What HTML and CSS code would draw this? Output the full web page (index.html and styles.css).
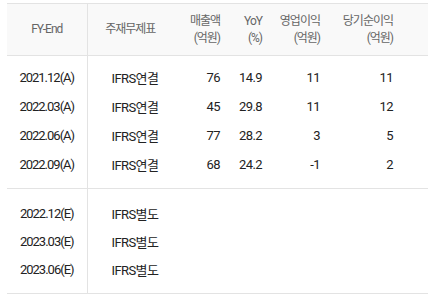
FILE: index.html
```html
<!DOCTYPE html>
<html lang="ko">
<head>
    <meta charset="UTF-8">
    <title>실적</title>
    <link rel="stylesheet" href="styles.css">
</head>
<body>
    <table class="fin-table">
        <colgroup>
            <col class="c-date">
            <col class="c-type">
            <col class="c-sales">
            <col class="c-yoy">
            <col class="c-op">
            <col class="c-net">
        </colgroup>
        <thead>
            <tr>
                <th class="first">FY-End</th>
                <th class="center">주재무제표</th>
                <th>매출액<br>(억원)</th>
                <th>YoY<br>(%)</th>
                <th>영업이익<br>(억원)</th>
                <th>당기순이익<br>(억원)</th>
            </tr>
        </thead>
        <!-- 실적 -->
        <tbody class="actual">
            <tr><td class="first">2021.12(A)</td><td class="type">IFRS연결</td><td>76</td><td>14.9</td><td>11</td><td>11</td></tr>
            <tr><td class="first">2022.03(A)</td><td class="type">IFRS연결</td><td>45</td><td>29.8</td><td>11</td><td>12</td></tr>
            <tr><td class="first">2022.06(A)</td><td class="type">IFRS연결</td><td>77</td><td>28.2</td><td>3</td><td>5</td></tr>
            <tr><td class="first">2022.09(A)</td><td class="type">IFRS연결</td><td>68</td><td>24.2</td><td>-1</td><td>2</td></tr>
        </tbody>
        <!-- 추정 -->
        <tbody class="estimate">
            <tr><td class="first">2022.12(E)</td><td class="type">IFRS별도</td><td></td><td></td><td></td><td></td></tr>
            <tr><td class="first">2023.03(E)</td><td class="type">IFRS별도</td><td></td><td></td><td></td><td></td></tr>
            <tr><td class="first">2023.06(E)</td><td class="type">IFRS별도</td><td></td><td></td><td></td><td></td></tr>
        </tbody>
    </table>
</body>
</html>
```

FILE: styles.css
```css
body {
    margin: 3px 0 0 7px;
    background-color: #ffffff;
    font-family: Roboto, "Noto Sans CJK KR", sans-serif;
}
.fin-table {
    width: 421px;
    table-layout: fixed;
    border-collapse: collapse;
    border-top: 1px solid #e3e3e3;
    border-bottom: 1px solid #e3e3e3;
}
.c-date { width: 80px; }
.c-type { width: 86px; }
.c-sales { width: 55px; }
.c-yoy { width: 42px; }
.c-op { width: 58px; }
.c-net { width: 100px; }
th {
    height: 51px;
    padding: 0 8px 0 0;
    background-color: #f9f9f9;
    color: #666666;
    font-size: 12px;
    font-weight: normal;
    line-height: 17px;
    letter-spacing: -1px;
    text-align: right;
    border-bottom: 1px solid #e3e3e3;
}
th:last-child, td:last-child {
    padding-right: 35px;
}
td {
    height: 29px;
    padding: 0 8px 0 0;
    color: #222222;
    font-size: 13px;
    letter-spacing: -0.6px;
    text-align: right;
}
.first {
    text-align: center;
    padding: 0;
    letter-spacing: -1px;
    border-right: 1px solid #e3e3e3;
}
.center {
    text-align: center;
    padding: 0;
}
.type {
    text-align: left;
    padding: 0 0 0 24px;
}
.actual tr:first-child td { padding-top: 7px; }
.actual tr:last-child td { padding-bottom: 9px; }
.estimate {
    border-top: 1px solid #e3e3e3;
}
.estimate td { height: 28px; }
.estimate tr:first-child td { padding-top: 10px; }
.estimate tr:last-child td { padding-bottom: 10px; }
```
